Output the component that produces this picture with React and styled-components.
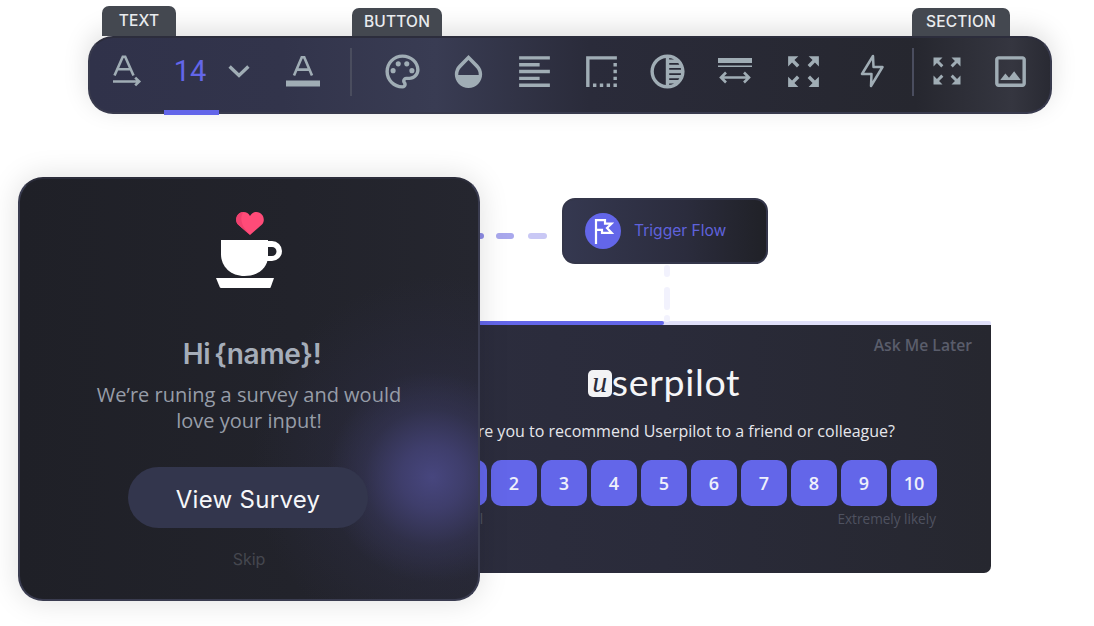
import React from 'react'
import styled, { createGlobalStyle } from 'styled-components'
import {
	MdOutlinePalette,
	MdOpacity,
	MdFormatAlignLeft,
	MdBorderStyle,
	MdTonality,
	MdZoomOutMap,
	MdOutlineImage
} from 'react-icons/md'

const GlobalStyle = createGlobalStyle`
	html, body {
		margin: 0;
		padding: 0;
		background: #ffffff;
	}
`

const Page = styled.div`
	position: relative;
	width: 1094px;
	height: 626px;
	overflow: hidden;
	background: #ffffff;
	font-family: Inter, "Liberation Sans", sans-serif;
`

const TabRow = styled.div`
	display: flex;
	align-items: flex-end;
	height: 30px;
	margin: 6px 0 0 88px;
`

const Tab = styled.div`
	display: flex;
	align-items: center;
	justify-content: center;
	box-sizing: border-box;
	width: ${props => props.$width}px;
	height: ${props => props.$height}px;
	margin-left: ${props => props.$offset}px;
	padding-bottom: 1px;
	border-radius: 7px 7px 0 0;
	background: #444850;
	color: #e9ebee;
	font-size: 15.5px;
	font-weight: 500;
	letter-spacing: 0.2px;
`

const Toolbar = styled.div`
	display: flex;
	align-items: center;
	box-sizing: border-box;
	width: 964px;
	height: 78px;
	margin-left: 88px;
	padding-left: 11px;
	border: 2px solid #383a4d;
	border-top-color: #2c2d3c;
	border-radius: 25px;
	background: linear-gradient(90deg, #30324a 0%, #32344b 20%, #393c53 36%, #2a2b3a 52%, #26272f 86%, #353640 96%, #292a33 100%);
	box-shadow: 0 -6px 26px rgba(0, 0, 0, 0.13);
`

const Slot = styled.div`
	position: relative;
	display: flex;
	flex: none;
	align-items: center;
	justify-content: center;
	box-sizing: border-box;
	width: ${props => props.$width}px;
	height: 74px;
	padding-bottom: 8px;
	color: #a0adb5;
`

const SizeValue = styled.span`
	color: #6366e9;
	font-family: Roboto, sans-serif;
	font-size: 29px;
	font-weight: 400;
	margin-left: -3px;
`

const ActiveBar = styled.div`
	position: absolute;
	left: 0;
	right: 0;
	bottom: -3px;
	height: 5px;
	background: #6366e9;
`

const Divider = styled.div`
	flex: none;
	width: 2px;
	height: 48px;
	margin-top: -6px;
	background: #4a4d5e;
`

const Stage = styled.div`
	position: relative;
	display: flex;
	align-items: flex-start;
	margin-top: 63px;
	padding-left: 18px;
`

const Popup = styled.div`
	position: relative;
	z-index: 2;
	display: flex;
	flex: none;
	flex-direction: column;
	align-items: center;
	box-sizing: border-box;
	width: 462px;
	height: 424px;
	padding-top: 31px;
	border: 2px solid #3a3c50;
	border-top-color: #2b2c3a;
	border-radius: 25px;
	background:
		radial-gradient(circle 105px at 90% 71%, #47467e 0%, rgba(66, 65, 115, 0.85) 30%, rgba(56, 56, 92, 0.45) 65%, rgba(50, 50, 80, 0) 100%),
		radial-gradient(circle 190px at 92% 68%, rgba(48, 48, 76, 0.8) 0%, rgba(46, 46, 72, 0.35) 55%, rgba(46, 46, 72, 0) 100%),
		linear-gradient(90deg, #1f2027 0%, #22232b 60%, #25262f 100%);
	box-shadow: 0 0 30px rgba(0, 0, 0, 0.13);
`

const CupIcon = styled.svg`
	display: block;
	margin-left: 4px;
`

const Title = styled.h2`
	margin: 48px 0 0 6px;
	color: #a5adb9;
	font-family: Inter, sans-serif;
	font-size: 28px;
	font-weight: 600;
	line-height: 36px;
	letter-spacing: -0.3px;
	word-spacing: -3px;
`

const Lead = styled.p`
	margin: 10px 0 0;
	color: #979da8;
	font-family: "Open Sans", sans-serif;
	font-size: 20px;
	line-height: 26px;
	text-align: center;
`

const SurveyButton = styled.button`
	width: 240px;
	height: 61px;
	margin: 33px 2px 0 0;
	padding: 3px 0 0;
	border: none;
	border-radius: 31px;
	background: #33364d;
	color: #f6f7f9;
	font-family: Inter, sans-serif;
	font-size: 24px;
	font-weight: 400;
	letter-spacing: 0.3px;
`

const Skip = styled.div`
	margin-top: 21px;
	color: #45474f;
	font-size: 16px;
`

const RightColumn = styled.div`
	display: flex;
	flex: none;
	flex-direction: column;
	width: 654px;
	margin-left: -143px;
	padding-top: 21px;
`

const TriggerNode = styled.div`
	position: relative;
	z-index: 1;
	display: flex;
	align-items: center;
	box-sizing: border-box;
	width: 206px;
	height: 66px;
	margin-left: 225px;
	padding-left: 21px;
	border: 2px solid #34364a;
	border-radius: 13px;
	background: linear-gradient(90deg, #353850 0%, #2b2c3d 60%, #202127 100%);
`

const FlagCircle = styled.div`
	display: flex;
	align-items: center;
	justify-content: center;
	width: 36px;
	height: 36px;
	border-radius: 50%;
	background: #6366e9;
`

const TriggerLabel = styled.span`
	margin: -2px 0 0 13px;
	color: #5f62dc;
	font-family: Inter, sans-serif;
	font-size: 15.6px;
`

const Progress = styled.div`
	height: 4px;
	margin-top: 57px;
	border-radius: 2px 2px 0 0;
	background: #dfdff8;
`

const ProgressFill = styled.div`
	height: 4px;
	border-radius: 2px;
	background: #6366e9;
`

const Survey = styled.div`
	display: flex;
	flex-direction: column;
	box-sizing: border-box;
	height: 248px;
	border-radius: 0 0 7px 7px;
	background: linear-gradient(90deg, #2d2e40 0%, #2a2b3a 50%, #26272f 100%);
	font-family: "Open Sans", sans-serif;
`

const AskLater = styled.div`
	align-self: flex-end;
	margin: 10px 19px 0 0;
	color: #5a5d6b;
	font-size: 15.7px;
	font-weight: 600;
	line-height: 20px;
`

const Logo = styled.div`
	display: flex;
	align-items: center;
	align-self: center;
	height: 44px;
	margin-top: 4px;
`

const LogoMark = styled.span`
	display: flex;
	align-items: center;
	justify-content: center;
	box-sizing: border-box;
	width: 24px;
	height: 27px;
	margin-top: 5px;
	padding-bottom: 4px;
	border-radius: 5px;
	background: #f3f3f5;
	color: #2a2b3a;
	font-family: "Liberation Serif", serif;
	font-size: 30px;
	font-style: italic;
	line-height: 22px;
`

const LogoText = styled.span`
	color: #f5f5f7;
	font-family: Lato, sans-serif;
	font-size: 37.5px;
	font-weight: 400;
	letter-spacing: 0.7px;
`

const Question = styled.div`
	align-self: flex-end;
	margin: 16px 96px 0 0;
	color: #e6e7ec;
	font-size: 16px;
	line-height: 24px;
	white-space: nowrap;
`

const Scale = styled.div`
	display: flex;
	align-self: flex-end;
	gap: 4px;
	margin: 17px 54px 0 0;
`

const ScaleButton = styled.div`
	display: flex;
	align-items: center;
	justify-content: center;
	width: 46px;
	height: 46px;
	border-radius: 10px;
	background: #6366e9;
	color: #eef0fb;
	font-size: 18px;
	font-weight: 600;
`

const ScaleLabels = styled.div`
	display: flex;
	align-self: flex-end;
	justify-content: space-between;
	width: 510px;
	margin: 4px 55px 0 0;
	color: #4f5260;
	font-size: 13.6px;
	line-height: 18px;
`

const Connectors = styled.svg`
	position: absolute;
	z-index: 0;
	left: 0;
	top: 0;
	pointer-events: none;
`

const ArrowTextIcon = () => (
	<svg width="30" height="32" viewBox="0 0 30 32" fill="none" stroke="currentColor">
		<path d="M2.5 20.5 10.8 1.8h2.4L21.5 20.5M5.6 14.2h12.8" strokeWidth="2.6" />
		<path d="M1 26.5h26M23.2 22.6l4 3.9-4 3.9" strokeWidth="2.6" />
	</svg>
)

const Chevron = () => (
	<svg width="22" height="14" viewBox="0 0 22 14" fill="none" stroke="currentColor" strokeWidth="3.4">
		<path d="M1.6 2.6 11 11.4 20.4 2.6" />
	</svg>
)

const UnderlineTextIcon = () => (
	<svg width="34" height="31" viewBox="0 0 34 31" fill="none" stroke="currentColor">
		<path d="M8 19.5 15.8 1.2h2.4L26 19.5M10.8 13.6h12.4" strokeWidth="2.6" />
		<path d="M0 27.5h34" strokeWidth="6" />
	</svg>
)

const WidthIcon = () => (
	<svg width="36" height="28" viewBox="0 0 36 28" fill="none" stroke="currentColor">
		<path d="M1 3.5h34" strokeWidth="5" />
		<path d="M1 9.2h34" strokeWidth="1.6" />
		<path d="M4 20.5h28M9 15.5l-5 5 5 5M27 15.5l5 5-5 5" strokeWidth="2.6" />
	</svg>
)

const BoltIcon = () => (
	<svg width="24" height="34" viewBox="0 0 24 34" fill="none" stroke="currentColor" strokeWidth="2.5" strokeLinejoin="round">
		<path d="M13 2 2 20h9.5l-.5 12L22.5 13H13.5z" />
	</svg>
)

const FlagIcon = () => (
	<svg width="22" height="26" viewBox="0 0 22 26" fill="none" stroke="#ffffff" strokeWidth="2.2">
		<path d="M4 1v25" />
		<path d="M4 2.2h9v3.5h6.5L15 10l4.5 4.800H10v-3H4" />
	</svg>
)

const CupArt = () => (
	<CupIcon width="70" height="78" viewBox="0 0 70 78">
		<path d="M22 14.5C18 10 21 2 27.5 2c3 0 5.2 1.5 6.5 4 1.3-2.500 3.500-4 6.500-4C47 2 50 10 46 14.500L34 25z" fill="#ff4b78" />
		<path d="M27.500 2C21 2 18 10 22 14.500L34 25l-2.500-3C25 15 23.500 7 27.500 2z" fill="#f0406e" />
		<path fill="#ffffff" d="M5 30h47v16c0 12-10 20-23.500 20S5 57 5 44z" />
		<path fill="#ffffff" fillRule="evenodd" d="M50 31h6a10 10 0 0 1 0 20H48zM52 37v9h4a4.500 4.500 0 0 0 0-9z" />
		<path fill="#ffffff" d="M0 68h58l-3.400 9.400c-.3.400-.8.600-1.300.600H5.100c-.6 0-1-.2-1.300-.7z" />
	</CupIcon>
)

const scaleValues = [1, 2, 3, 4, 5, 6, 7, 8, 9, 10]

const App = () => {
	return (
		<Page>
			<GlobalStyle />
			<TabRow>
				<Tab $width={74} $height={30} $offset={14}>TEXT</Tab>
				<Tab $width={90} $height={28} $offset={176}>BUTTON</Tab>
				<Tab $width={98} $height={28} $offset={470}>SECTION</Tab>
			</TabRow>
			<Toolbar>
				<Slot $width={52}><ArrowTextIcon /></Slot>
				<Slot $width={11} />
				<Slot $width={55}>
					<SizeValue>14</SizeValue>
					<ActiveBar />
				</Slot>
				<Slot $width={40}><Chevron /></Slot>
				<Slot $width={88}><UnderlineTextIcon /></Slot>
				<Slot $width={3} />
				<Divider />
				<Slot $width={17} />
				<Slot $width={66}><MdOutlinePalette size={41} /></Slot>
				<Slot $width={66.5}><MdOpacity size={41} /></Slot>
				<Slot $width={66.5}><MdFormatAlignLeft size={41} /></Slot>
				<Slot $width={66.5}><MdBorderStyle size={41} /></Slot>
				<Slot $width={66.5}><MdTonality size={41} /></Slot>
				<Slot $width={67.5}><WidthIcon /></Slot>
				<Slot $width={69}><MdZoomOutMap size={41} /></Slot>
				<Slot $width={69}><BoltIcon /></Slot>
				<Slot $width={5} />
				<Divider />
				<Slot $width={1} />
				<Slot $width={65}><MdZoomOutMap size={36} /></Slot>
				<Slot $width={62}><MdOutlineImage size={41} /></Slot>
			</Toolbar>
			<Stage>
				<Connectors width="1094" height="200" fill="none" strokeWidth="6" strokeLinecap="round">
					<path d="M478 59h3" stroke="#8e8ce6" />
					<path d="M499 59h12" stroke="#a9a8ed" />
					<path d="M531 59h13" stroke="#c9c8f5" />
					<path d="M667 91v6M667 113v17M667 141v1" stroke="#f2f2fd" />
				</Connectors>
				<Popup>
					<CupArt />
					<Title>Hi {'{name}'}!</Title>
					<Lead>We’re runing a survey and would<br />love your input!</Lead>
					<SurveyButton>View Survey</SurveyButton>
					<Skip>Skip</Skip>
				</Popup>
				<RightColumn>
					<TriggerNode>
						<FlagCircle><FlagIcon /></FlagCircle>
						<TriggerLabel>Trigger Flow</TriggerLabel>
					</TriggerNode>
					<Progress>
						<ProgressFill style={{ width: `${(327 / 654) * 100}%` }} />
					</Progress>
					<Survey>
						<AskLater>Ask Me Later</AskLater>
						<Logo>
							<LogoMark>u</LogoMark>
							<LogoText>serpilot</LogoText>
						</Logo>
						<Question>How likely are you to recommend Userpilot to a friend or colleague?</Question>
						<Scale>
							{scaleValues.map(value => (
								<ScaleButton key={value}>{value}</ScaleButton>
							))}
						</Scale>
						<ScaleLabels>
							<span>Not at all</span>
							<span>Extremely likely</span>
						</ScaleLabels>
					</Survey>
				</RightColumn>
			</Stage>
		</Page>
	)
}

export default App
